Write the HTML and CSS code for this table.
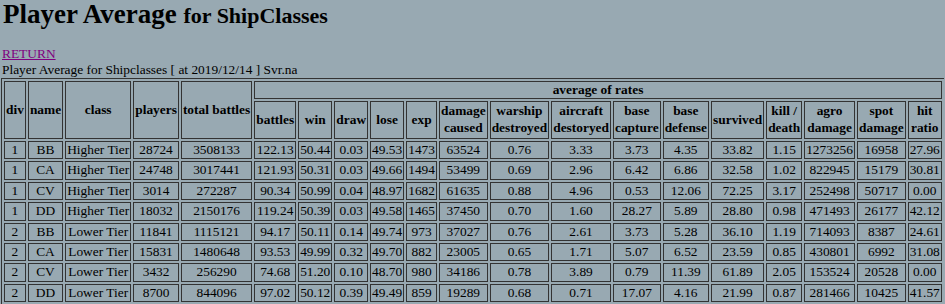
FILE: index.html
```html
<!DOCTYPE html>
<html>
<head>
<meta charset="utf-8">
<title>Player Average for ShipClasses</title>
<link rel="stylesheet" href="styles.css">
</head>
<body>
<h1 class="title">Player Average <span class="title-small">for ShipClasses</span></h1>
<a class="return" href="#">RETURN</a><br>
<div class="caption">Player Average for Shipclasses [ at 2019/12/14 ] Svr.na</div>
<table class="stats">
<thead>
<tr class="head-top">
<th rowspan="2" class="w-div">div</th>
<th rowspan="2" class="w-name">name</th>
<th rowspan="2" class="w-class">class</th>
<th rowspan="2" class="w-players">players</th>
<th rowspan="2" class="w-total">total battles</th>
<th colspan="16">average of rates</th>
</tr>
<tr class="head-sub">
<th class="w-battles">battles</th>
<th class="w-win">win</th>
<th class="w-draw">draw</th>
<th class="w-lose">lose</th>
<th class="w-exp">exp</th>
<th class="w-damage">damage<br>caused</th>
<th class="w-warship">warship<br>destroyed</th>
<th class="w-aircraft">aircraft<br>destoryed</th>
<th class="w-capture">base<br>capture</th>
<th class="w-defense">base<br>defense</th>
<th class="w-survived">survived</th>
<th class="w-kill">kill /<br>death</th>
<th class="w-agro">agro<br>damage</th>
<th class="w-spot">spot<br>damage</th>
<th class="w-hit">hit<br>ratio</th>
</tr>
</thead>
<tbody>
<tr><td>1</td><td>BB</td><td>Higher Tier</td><td>28724</td><td>3508133</td><td>122.13</td><td>50.44</td><td>0.03</td><td>49.53</td><td>1473</td><td>63524</td><td>0.76</td><td>3.33</td><td>3.73</td><td>4.35</td><td>33.82</td><td>1.15</td><td>1273256</td><td>16958</td><td>27.96</td></tr>
<tr><td>1</td><td>CA</td><td>Higher Tier</td><td>24748</td><td>3017441</td><td>121.93</td><td>50.31</td><td>0.03</td><td>49.66</td><td>1494</td><td>53499</td><td>0.69</td><td>2.96</td><td>6.42</td><td>6.86</td><td>32.58</td><td>1.02</td><td>822945</td><td>15179</td><td>30.81</td></tr>
<tr><td>1</td><td>CV</td><td>Higher Tier</td><td>3014</td><td>272287</td><td>90.34</td><td>50.99</td><td>0.04</td><td>48.97</td><td>1682</td><td>61635</td><td>0.88</td><td>4.96</td><td>0.53</td><td>12.06</td><td>72.25</td><td>3.17</td><td>252498</td><td>50717</td><td>0.00</td></tr>
<tr><td>1</td><td>DD</td><td>Higher Tier</td><td>18032</td><td>2150176</td><td>119.24</td><td>50.39</td><td>0.03</td><td>49.58</td><td>1465</td><td>37450</td><td>0.70</td><td>1.60</td><td>28.27</td><td>5.89</td><td>28.80</td><td>0.98</td><td>471493</td><td>26177</td><td>42.12</td></tr>
<tr><td>2</td><td>BB</td><td>Lower Tier</td><td>11841</td><td>1115121</td><td>94.17</td><td>50.11</td><td>0.14</td><td>49.74</td><td>973</td><td>37027</td><td>0.76</td><td>2.61</td><td>3.73</td><td>5.28</td><td>36.10</td><td>1.19</td><td>714093</td><td>8387</td><td>24.61</td></tr>
<tr><td>2</td><td>CA</td><td>Lower Tier</td><td>15831</td><td>1480648</td><td>93.53</td><td>49.99</td><td>0.32</td><td>49.70</td><td>882</td><td>23005</td><td>0.65</td><td>1.71</td><td>5.07</td><td>6.52</td><td>23.59</td><td>0.85</td><td>430801</td><td>6992</td><td>31.08</td></tr>
<tr><td>2</td><td>CV</td><td>Lower Tier</td><td>3432</td><td>256290</td><td>74.68</td><td>51.20</td><td>0.10</td><td>48.70</td><td>980</td><td>34186</td><td>0.78</td><td>3.89</td><td>0.79</td><td>11.39</td><td>61.89</td><td>2.05</td><td>153524</td><td>20528</td><td>0.00</td></tr>
<tr><td>2</td><td>DD</td><td>Lower Tier</td><td>8700</td><td>844096</td><td>97.02</td><td>50.12</td><td>0.39</td><td>49.49</td><td>859</td><td>19289</td><td>0.68</td><td>0.71</td><td>17.07</td><td>4.16</td><td>21.99</td><td>0.87</td><td>281466</td><td>10425</td><td>41.57</td></tr>
</tbody>
</table>
</body>
</html>
```

FILE: styles.css
```css
html, body {
  background: #98a9b2;
}
body {
  margin: 0 1px;
  font-family: "Liberation Serif", "Times New Roman", serif;
  font-size: 13.4px;
  line-height: 15.5px;
  color: #000;
}
.title {
  margin: 0 0 16px 2px;
  font-size: 27px;
  line-height: 29px;
  font-weight: bold;
}
.title-small {
  font-size: 22px;
}
.return {
  color: #800080;
  margin-left: 1px;
}
.caption {
  margin-left: 1px;
}
.stats {
  border: 1px solid #333;
  border-spacing: 2px;
  margin-top: 1px;
}
.stats th,
.stats td {
  box-sizing: border-box;
  border: 1px solid #333;
  padding: 1px;
  text-align: center;
  white-space: nowrap;
  line-height: 14.4px;
}
.stats th {
  font-weight: bold;
}
.head-sub th {
  line-height: 16.8px;
}
.w-div { width: 22px; }
.w-name { width: 34px; }
.w-class { width: 67px; }
.w-players { width: 46px; }
.w-total { width: 71px; }
.w-battles { width: 42px; }
.w-win { width: 34px; }
.w-draw { width: 33px; }
.w-lose { width: 34px; }
.w-exp { width: 30px; }
.w-damage { width: 48px; }
.w-warship { width: 60px; }
.w-aircraft { width: 61px; }
.w-capture { width: 47px; }
.w-defense { width: 45px; }
.w-survived { width: 54px; }
.w-kill { width: 36px; }
.w-agro { width: 50px; }
.w-spot { width: 48px; }
.w-hit { width: 34px; }
```
